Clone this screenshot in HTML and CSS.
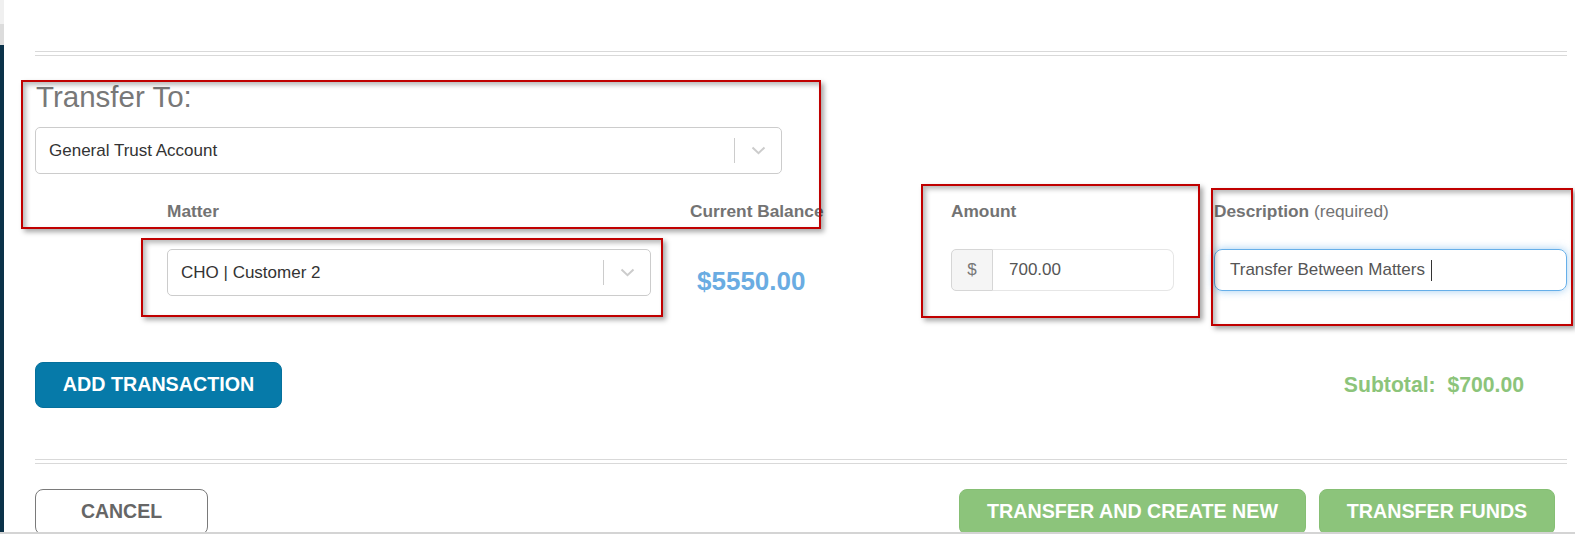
FILE: index.html
```html
<!DOCTYPE html>
<html lang="en">
<head>
<meta charset="utf-8">
<title>Transfer Funds</title>
<link rel="stylesheet" href="styles.css">
</head>
<body>
<div class="page">
  <div class="sidebar"></div>
  <main class="content">
    <hr class="double">
    <h3 class="title">Transfer To:</h3>
    <div class="select select-account">
      <span class="select-value">General Trust Account</span>
      <span class="select-indicator">
        <span class="select-sep"></span>
        <svg class="chev" width="15" height="9" viewBox="0 0 15 9"><path d="M1.5 1.5 L7.5 7.2 L13.5 1.5" fill="none" stroke="#cccccc" stroke-width="2"/></svg>
      </span>
    </div>

    <div class="tx-grid">
      <div class="lbl">Matter</div>
      <div class="lbl">Current Balance</div>
      <div class="lbl">Amount</div>
      <div class="lbl">Description <span class="lbl-note">(required)</span></div>

      <div class="cell">
        <div class="select select-matter">
          <span class="select-value">CHO | Customer 2</span>
          <span class="select-indicator">
            <span class="select-sep"></span>
            <svg class="chev" width="15" height="9" viewBox="0 0 15 9"><path d="M1.5 1.5 L7.5 7.2 L13.5 1.5" fill="none" stroke="#cccccc" stroke-width="2"/></svg>
          </span>
        </div>
      </div>
      <div class="cell balance">$5550.00</div>
      <div class="cell">
        <div class="input-group">
          <span class="addon">$</span>
          <span class="amount-input">700.00</span>
        </div>
      </div>
      <div class="cell">
        <div class="desc-input"><span>Transfer Between Matters</span><span class="caret"></span></div>
      </div>
    </div>

    <div class="actions-row">
      <button class="btn btn-blue">ADD TRANSACTION</button>
      <div class="subtotal">Subtotal:&nbsp; $700.00</div>
    </div>

    <hr class="double hr-bottom">

    <div class="footer">
      <button class="btn btn-cancel">CANCEL</button>
      <div class="footer-right">
        <button class="btn btn-green btn-create">TRANSFER AND CREATE NEW</button>
        <button class="btn btn-green btn-funds">TRANSFER FUNDS</button>
      </div>
    </div>
  </main>
</div>

<div class="mark mark-1"></div>
<div class="mark mark-2"></div>
<div class="mark mark-3"></div>
<div class="mark mark-4"></div>
<div class="window-edge"></div>
</body>
</html>
```

FILE: styles.css
```css
* { box-sizing: border-box; }

html, body {
  margin: 0;
  padding: 0;
  width: 1575px;
  height: 534px;
  overflow: hidden;
  background: #ffffff;
  font-family: "Liberation Sans", Arial, sans-serif;
}

body { position: relative; }

.page {
  display: flex;
  height: 534px;
}

.sidebar {
  width: 4px;
  flex: 0 0 4px;
  background: linear-gradient(#f0f0f0 0 24px, #dcdcdc 24px 45px, #0b3249 45px);
}

.content {
  flex: 1;
  padding: 51px 8px 0 31px;
}

.double {
  margin: 0;
  height: 5px;
  border: 0;
  border-top: 1px solid #d9d9d9;
  border-bottom: 1px solid #d9d9d9;
}

.title {
  margin: 25px 0 0 1px;
  font-size: 29.5px;
  line-height: 32px;
  font-weight: normal;
  color: #787878;
}

.select {
  display: flex;
  align-items: center;
  height: 47px;
  border: 1px solid #cccccc;
  border-radius: 5px;
  background: #fff;
  padding-left: 13px;
}

.select-account {
  margin-top: 14px;
  width: 747px;
}

.select-value {
  flex: 1;
  font-size: 17px;
  color: #333333;
}

.select-indicator {
  display: flex;
  align-items: center;
  height: 100%;
}

.select-sep {
  width: 1px;
  height: 25px;
  background: #cccccc;
  margin-right: 16px;
}

.chev { display: block; margin-right: 15px; }

.tx-grid {
  display: grid;
  grid-template-columns: 523px 261px 263px 353px;
  grid-template-rows: 24px 47px;
  row-gap: 26px;
  margin: 25px 0 0 132px;
}

.lbl {
  font-size: 17.3px;
  line-height: 24px;
  font-weight: bold;
  color: #737373;
  white-space: nowrap;
}

.lbl-note { font-weight: normal; }

.select-matter { width: 484px; }

.balance {
  padding: 17px 0 0 7px;
  font-size: 26px;
  line-height: 30px;
  font-weight: bold;
  color: #6aace2;
}

.input-group {
  display: flex;
  width: 223px;
  height: 42px;
}

.addon {
  width: 42px;
  display: flex;
  align-items: center;
  justify-content: center;
  background: #f5f5f5;
  border: 1px solid #d6d6d6;
  border-radius: 5px 0 0 5px;
  color: #777777;
  font-size: 17px;
}

.amount-input {
  flex: 1;
  display: flex;
  align-items: center;
  padding-left: 16px;
  border: 1px solid #e6e6e6;
  border-left: 0;
  border-radius: 0 7px 7px 0;
  font-size: 17px;
  color: #555555;
}

.desc-input {
  display: flex;
  align-items: center;
  width: 353px;
  height: 42px;
  padding-left: 15px;
  border: 1px solid #66afe9;
  border-radius: 8px;
  box-shadow: 0 0 8px rgba(102, 175, 233, 0.6);
  font-size: 17px;
  color: #555555;
}

.caret {
  display: inline-block;
  width: 1px;
  height: 21px;
  margin-left: 6px;
  background: #333333;
}

.actions-row {
  display: flex;
  align-items: center;
  justify-content: space-between;
  margin-top: 66px;
  height: 46px;
}

.btn {
  font-family: "Liberation Sans", Arial, sans-serif;
  font-weight: bold;
  font-size: 19.7px;
  height: 46px;
  border-radius: 8px;
  padding: 0 0 2px;
  text-align: center;
  cursor: pointer;
}

.btn-blue {
  width: 247px;
  background: #067aa9;
  border: 1px solid #05709c;
  color: #ffffff;
}

.subtotal {
  margin-right: 43px;
  font-size: 21.2px;
  font-weight: bold;
  color: #8cc47a;
}

.hr-bottom { margin-top: 51px; }

.footer {
  display: flex;
  justify-content: space-between;
  margin-top: 25px;
}

.btn-cancel {
  width: 173px;
  background: #ffffff;
  border: 1px solid #7a7a7a;
  color: #666666;
  font-size: 19.5px;
}

.footer-right {
  display: flex;
  gap: 13px;
  margin-right: 12px;
}

.btn-green {
  background: #8cc47b;
  border: 1px solid #86bf74;
  color: #ffffff;
}

.btn-create { width: 347px; }
.btn-funds { width: 236px; }

.mark {
  position: absolute;
  border: 2px solid #c00000;
  box-shadow: 3px 3px 5px rgba(0, 0, 0, 0.35), inset 3px 3px 5px rgba(0, 0, 0, 0.28);
  pointer-events: none;
}

.mark-1 { left: 21px; top: 80px; width: 800px; height: 149px; }
.mark-2 { left: 141px; top: 238px; width: 522px; height: 79px; }
.mark-3 { left: 921px; top: 184px; width: 279px; height: 134px; }
.mark-4 { left: 1211px; top: 188px; width: 362px; height: 138px; }

.window-edge {
  position: absolute;
  left: 0;
  top: 532px;
  width: 1575px;
  height: 2px;
  background: #d4d4d4;
}
```
